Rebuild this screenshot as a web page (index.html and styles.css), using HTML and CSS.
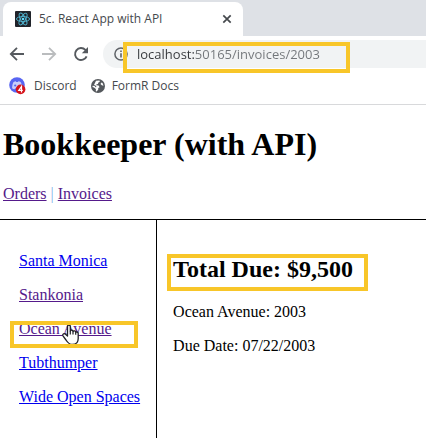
FILE: index.html
```html
<!DOCTYPE html>
<html lang="en">
<head>
<meta charset="utf-8">
<title>5c. React App with API</title>
<link rel="stylesheet" href="styles.css">
</head>
<body>
<div class="browser">
  <div class="tabstrip">
    <div class="tab">
      <svg class="favicon" width="16" height="16" viewBox="0 0 16 16" aria-hidden="true">
        <rect width="16" height="16" rx="1" fill="#20232a"/>
        <g fill="none" stroke="#4fb3cf" stroke-width="0.9">
          <ellipse cx="8" cy="8" rx="6.6" ry="2.5"/>
          <ellipse cx="8" cy="8" rx="6.6" ry="2.5" transform="rotate(60 8 8)"/>
          <ellipse cx="8" cy="8" rx="6.6" ry="2.5" transform="rotate(120 8 8)"/>
        </g>
        <circle cx="8" cy="8" r="1.3" fill="#61dafb"/>
      </svg>
      <span class="tab-title">5c. React App with API</span>
      <button class="icon-button" type="button" aria-label="Close tab">
        <svg width="10" height="10" viewBox="0 0 10 10"><path d="M1.3 1.3l7.4 7.4M8.7 1.3L1.3 8.7" stroke="#45494d" stroke-width="1.7"/></svg>
      </button>
    </div>
  </div>
  <div class="toolbar">
    <button class="icon-button" type="button" aria-label="Back">
      <svg width="16" height="16" viewBox="0 0 16 16"><path d="M15 8H2.5M8 1.8L1.8 8 8 14.2" fill="none" stroke="#55595e" stroke-width="1.8"/></svg>
    </button>
    <button class="icon-button" type="button" aria-label="Forward" disabled>
      <svg width="16" height="16" viewBox="0 0 16 16"><path d="M1 8h12.5M8 1.8L14.2 8 8 14.2" fill="none" stroke="#babcbe" stroke-width="1.8"/></svg>
    </button>
    <button class="icon-button" type="button" aria-label="Reload">
      <svg width="16" height="16" viewBox="0 0 16 16"><path d="M13.6 10.3A6 6 0 1 1 12.4 3.9L13.6 5.1" fill="none" stroke="#55595e" stroke-width="1.9"/><path d="M15 1v6.2H8.8z" fill="#55595e"/></svg>
    </button>
    <div class="address">
      <svg width="14" height="14" viewBox="0 0 14 14" aria-hidden="true"><circle cx="7" cy="7" r="6.1" fill="none" stroke="#5f6368" stroke-width="1.5"/><path d="M7 6.2v4.3M7 3.4v1.6" stroke="#5f6368" stroke-width="1.6"/></svg>
      <div class="highlighted url">
        <input class="url-input" type="text" aria-label="Address" value="localhost:50165/invoices/2003" spellcheck="false">
      </div>
    </div>
  </div>
  <div class="bookmarks">
    <a class="bookmark" href="#discord">
      <svg width="18" height="18" viewBox="0 0 18 18" aria-hidden="true">
        <circle cx="8" cy="8" r="7.8" fill="#5865f2"/>
        <path d="M3.1 11.2c0-2.8.7-5 1.5-6.2.8-.6 1.6-.8 2.2-.8l.4.7h1.8l.4-.7c.8.1 1.6.4 2.2.8 1 1.7 1.4 3.8 1.4 6.2-.7.6-1.5.9-2.4 1l-.6-1c-1.2.4-2.5.4-3.8 0l-.6 1c-1-.1-1.8-.4-2.5-1z" fill="#c9cdfb"/>
        <circle cx="6.2" cy="8.5" r="1.1" fill="#5865f2"/>
        <circle cx="11.6" cy="12.4" r="4.8" fill="#d5141c"/>
        <path d="M13.8 13.4H9.8l2.7-3.9v5.9" fill="none" stroke="#fff" stroke-width="1.2"/>
      </svg>
      <span>Discord</span>
    </a>
    <a class="bookmark" href="#docs">
      <svg width="14" height="14" viewBox="0 0 14 14" aria-hidden="true"><circle cx="7" cy="7" r="7" fill="#54585c"/><path d="M5 1.8L8.5 1.5 8.8 2.8 7.2 3.8 7 5 5.5 5.2 5.3 6.3 7.6 6.6 8.6 8.2 7.2 9 7.3 10.5 5.6 12.5 4.8 12.2 4.9 10 3 8.6 1.5 8 1.6 6.8 3.6 7 4.6 8.2 5.6 8 4.6 6.4 3 6z" fill="#fff"/><path d="M12.5 6.8L10.8 6.3 9.5 4.9 10.5 3.6 11.5 4z" fill="#fff"/></svg>
      <span>FormR Docs</span>
    </a>
  </div>
</div>

<div class="page">
  <h1>Bookkeeper (with API)</h1>
  <nav class="site-nav">
    <a class="visited" href="#orders">Orders</a> <span class="divider">|</span>
    <a class="visited" href="#invoices">Invoices</a>
  </nav>
</div>
<div class="columns">
  <nav class="invoice-list">
    <a href="#santa-monica">Santa Monica</a>
    <a class="visited" href="#stankonia">Stankonia</a>
    <div class="highlighted current">
      <a class="visited" href="#ocean-avenue">Ocean Avenue</a>
      <svg class="pointer" width="20" height="22" viewBox="0 0 20 22" aria-hidden="true"><path d="M6.5 12V2.4C6.5.5 9.3.5 9.3 2.4V7C10 5.7 12 6 12 7.5 12.8 6.4 14.7 6.9 14.7 8.3 15.7 7.6 17.2 8.2 17.2 9.7V14.5C17.2 18.5 15 20.5 11.5 20.5 8 20.5 6.5 18.5 5 16L2 11.8C1 10.2 3.2 9 4.5 10.3z" fill="#fff" stroke="#202027" stroke-width="1.3" stroke-linejoin="round"/><path d="M9.3 7v3.5M12 7.5v3M14.7 8.3v2.5" fill="none" stroke="#202027" stroke-width="1.2"/></svg>
    </div>
    <a href="#tubthumper">Tubthumper</a>
    <a href="#wide-open-spaces">Wide Open Spaces</a>
  </nav>
  <main class="invoice">
    <h2 class="highlighted total">Total Due: $9,500</h2>
    <p>Ocean Avenue: 2003</p>
    <p>Due Date: 07/22/2003</p>
  </main>
</div>
</body>
</html>
```
FILE: styles.css
```css
* {
  box-sizing: border-box;
}

body {
  margin: 0;
  background: #fff;
  color: #000;
  font: 16px/18px "Liberation Serif", "Times New Roman", serif;
}

/* Browser frame */
.browser {
  border-bottom: 1px solid #d8d9db;
  font: 12px/16px "Open Sans", "Segoe UI", sans-serif;
  color: #45494d;
}

.tabstrip {
  display: flex;
  height: 36px;
  padding: 2px 3px 0;
  background: #dee1e6;
}

.tab {
  display: flex;
  align-items: center;
  width: 240px;
  padding: 0 11px 0 12px;
  border-radius: 8px 8px 0 0;
  background: #fff;
}

.tab-title {
  flex: 1;
  margin-left: 8px;
  white-space: nowrap;
}

.icon-button {
  display: flex;
  padding: 0;
  border: 0;
  background: none;
}

.toolbar {
  display: flex;
  align-items: center;
  gap: 16px;
  height: 36px;
  padding: 0 0 0 9px;
}

.address {
  display: flex;
  flex: 1;
  align-items: center;
  gap: 9px;
  height: 28px;
  margin-left: -2px;
  padding-left: 11px;
  border-radius: 14px 0 0 14px;
  background: #f1f3f4;
}

.url-input {
  display: block;
  width: 200px;
  height: 20px;
  padding: 0;
  border: 0;
  outline: 0;
  background: linear-gradient(90deg, #35383c 57px, #72767a 57px);
  background-clip: text;
  -webkit-background-clip: text;
  color: transparent;
  font: 13px/20px "Open Sans", "Segoe UI", sans-serif;
}

.bookmarks {
  display: flex;
  align-items: center;
  gap: 14px;
  height: 32px;
  padding: 0 0 4px 9px;
}

.bookmark {
  display: flex;
  align-items: center;
  gap: 7px;
  color: inherit;
  text-decoration: none;
}

/* Yellow frames laid over the content they point at */
.highlighted {
  position: relative;
}

.highlighted::after {
  content: "";
  position: absolute;
  border: 4px solid #f8c629;
  pointer-events: none;
}

.url::after {
  inset: -2px -13px -9px -14px;
}

.current::after {
  inset: 1px 2px -10px -9px;
}

.total::after {
  inset: -2px 0 -8px -6px;
}

/* Page */
a {
  color: #0000ee;
}

a.visited {
  color: #551a8b;
}

.page {
  padding: 0 3px 16px;
  border-bottom: 1px solid #000;
}

h1 {
  margin: 0;
  padding: 21px 0 22px;
  font-size: 32px;
  line-height: 37px;
}

.divider {
  color: #7fb2e8;
}

.columns {
  display: flex;
}

.invoice-list {
  display: flex;
  flex-direction: column;
  gap: 16px;
  padding: 32px 16px 32px 19px;
  border-right: 1px solid #000;
  white-space: nowrap;
}

.pointer {
  position: absolute;
  left: 42px;
  top: 4px;
}

.invoice {
  padding: 36px 16px 16px;
}

h2 {
  width: fit-content;
  margin: 0 0 20px;
  padding-right: 15px;
  font-size: 24px;
  line-height: 27px;
}

p {
  margin: 0 0 16px;
}
```
